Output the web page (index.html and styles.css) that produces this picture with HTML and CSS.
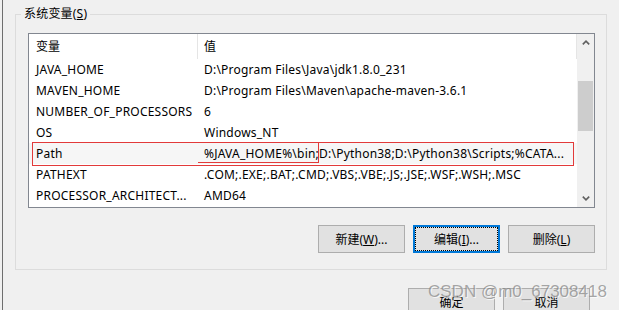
FILE: index.html
```html
<!DOCTYPE html>
<html lang="zh-CN">

<head>
  <meta charset="UTF-8" />
  <title>系统变量</title>
  <link rel="stylesheet" href="styles.css">
</head>

<body>
  <div class="window">
    <fieldset class="group">
      <legend>系统变量(<u>S</u>)</legend>
      <div class="listbox">
        <div class="list">
          <div class="row head"><span class="name">变量</span><span class="value">值</span></div>
          <div class="row"><span class="name">JAVA_HOME</span><span class="value">D:\Program Files\Java\jdk1.8.0_231</span></div>
          <div class="row"><span class="name">MAVEN_HOME</span><span class="value">D:\Program Files\Maven\apache-maven-3.6.1</span></div>
          <div class="row"><span class="name">NUMBER_OF_PROCESSORS</span><span class="value">6</span></div>
          <div class="row"><span class="name">OS</span><span class="value">Windows_NT</span></div>
          <div class="row marked"><span class="name">Path</span><span class="value"><span class="mark">%JAVA_HOME%\bin</span>;D:\Python38;D:\Python38\Scripts;%CATA...</span></div>
          <div class="row"><span class="name">PATHEXT</span><span class="value">.COM;.EXE;.BAT;.CMD;.VBS;.VBE;.JS;.JSE;.WSF;.WSH;.MSC</span></div>
          <div class="row"><span class="name">PROCESSOR_ARCHITECT...</span><span class="value">AMD64</span></div>
        </div>
        <div class="scrollbar">
          <div class="arrow">
            <svg width="8" height="5" viewBox="0 0 8 5"><polyline points="0.8,4.4 4,1.2 7.2,4.4" fill="none" stroke="#606060" stroke-width="1.6" /></svg>
          </div>
          <div class="track"><div class="thumb"></div></div>
          <div class="arrow">
            <svg width="8" height="5" viewBox="0 0 8 5"><polyline points="0.8,0.6 4,3.8 7.2,0.6" fill="none" stroke="#606060" stroke-width="1.6" /></svg>
          </div>
        </div>
      </div>
      <div class="actions">
        <button class="btn">新建(<u>W</u>)...</button>
        <button class="btn focus">编辑(<u>I</u>)...</button>
        <button class="btn">删除(<u>L</u>)</button>
      </div>
    </fieldset>

    <div class="dialog-buttons">
      <button class="btn">确定</button>
      <button class="btn">取消</button>
    </div>

    <div class="watermark">CSDN @m0_67308418</div>
  </div>
</body>

</html>
```

FILE: styles.css
```css
body {
  margin: 0;
  background: #f0f0f0;
  font-family: "Noto Sans", "Noto Sans CJK SC", sans-serif;
  font-size: 12px;
  color: #000;
  overflow: hidden;
}

.window {
  position: relative;
  margin-left: 2px;
  border-left: 1px solid #6e6e6e;
  height: 310px;
  padding: 6px 0 0 12px;
  box-sizing: border-box;
}

/* group box */
.group {
  margin: 0;
  padding: 11px 11px 16px 12px;
  width: 592px;
  box-sizing: border-box;
  border: 1px solid #dcdcdc;
  min-inline-size: 0;
}

.group legend {
  margin-left: -7px;
  padding: 0 3px;
  height: 16px;
  line-height: 16px;
  letter-spacing: 0.2px;
}

.listbox {
  display: flex;
  height: 175px;
  box-sizing: border-box;
  border: 1px solid #828790;
  background: #fff;
}

.list {
  flex: 1;
  min-width: 0;
}

.row {
  display: flex;
  height: 21px;
  line-height: 21px;
  white-space: nowrap;
  letter-spacing: 0.22px;
}

.row.head {
  height: 25px;
  line-height: 25px;
  border-right: 1px solid #e5e5e5;
  letter-spacing: 0;
}

.name {
  width: 169px;
  flex: none;
  box-sizing: border-box;
  padding-left: 7px;
  border-right: 1px solid transparent;
  overflow: hidden;
}

.head .name {
  border-right-color: #e5e5e5;
}

.value {
  padding-left: 6px;
  overflow: hidden;
}

.row.marked {
  position: relative;
  background: #f6f6f6;
}

.row.marked::after {
  content: '';
  position: absolute;
  left: 3px;
  right: 3px;
  top: -1px;
  bottom: -2px;
  border: 1px solid #e23a3a;
}

.mark {
  position: relative;
  display: inline-block;
  height: 21px;
  line-height: 21px;
  vertical-align: top;
}

.mark::after {
  content: '';
  position: absolute;
  left: -8px;
  right: -3px;
  top: -1px;
  bottom: 1px;
  border: 1px solid #e23a3a;
}

/* scrollbar */
.scrollbar {
  width: 17px;
  flex: none;
  display: flex;
  flex-direction: column;
  background: #f0f0f0;
}

.arrow {
  height: 17px;
  display: flex;
  align-items: center;
  justify-content: center;
}

.arrow svg {
  display: block;
}

.track {
  flex: 1;
}

.thumb {
  margin: 30px 1px 0;
  height: 50px;
  background: #cdcdcd;
}

/* buttons */
.actions {
  display: flex;
  justify-content: flex-end;
  gap: 8px;
  margin-top: 17px;
}

.btn {
  width: 87px;
  height: 28px;
  box-sizing: border-box;
  padding: 0;
  border: 1px solid #adadad;
  background: #e1e1e1;
  font: inherit;
  color: #000;
}

.btn.focus {
  border: 2px solid #0078d7;
  outline: 1px dotted #000;
  outline-offset: -3px;
}

.dialog-buttons {
  display: flex;
  justify-content: flex-end;
  gap: 8px;
  margin-top: 18px;
  padding-right: 29px;
}

.watermark {
  position: absolute;
  left: 425px;
  top: 283px;
  font-family: "Liberation Sans", sans-serif;
  font-size: 17px;
  line-height: 17px;
  color: rgba(130, 130, 130, 0.7);
  text-shadow: 1px 1px 0 rgba(255, 255, 255, 0.7);
  white-space: nowrap;
}
```
